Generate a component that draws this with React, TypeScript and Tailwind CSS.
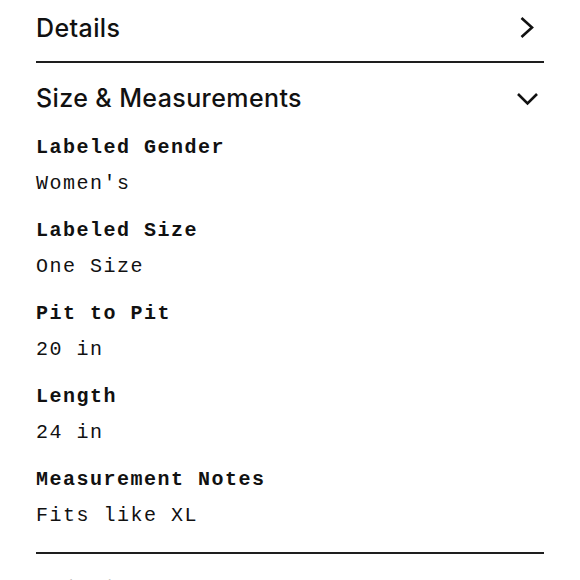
import React from "react";

const items = [
  { label: "Labeled Gender", value: "Women's" },
  { label: "Labeled Size", value: "One Size" },
  { label: "Pit to Pit", value: "20 in" },
  { label: "Length", value: "24 in" },
  { label: "Measurement Notes", value: "Fits like XL" },
];

const sans = { fontFamily: "Inter, 'Liberation Sans', sans-serif" };
const mono = { fontFamily: "'Liberation Mono', 'DejaVu Sans Mono', monospace" };

export default function App() {
  return (
    <div className="w-[580px] h-[580px] overflow-hidden bg-white text-[#111]">
      <div className="mx-[36px] flex flex-col">
        <div className="pt-[13px] flex items-center justify-between h-[44px]">
          <span className="text-[25px] leading-[31px] font-medium tracking-[0.4px]" style={sans}>
            Details
          </span>
          <svg width="32" height="32" viewBox="0 0 32 32" fill="none" className="shrink-0 -mt-[1px]">
            <path d="M9.5 6 L20 15.5 L9.5 25" stroke="#111" strokeWidth="2.6" strokeLinejoin="miter" />
          </svg>
        </div>
        <div className="mt-[17px] h-[2px] bg-[#1e1e1e]" />
        <div className="mt-[20px] flex items-center justify-between h-[31px]">
          <span className="text-[25px] leading-[31px] font-medium tracking-[0.4px]" style={sans}>
            Size &amp; Measurements
          </span>
          <svg width="32" height="32" viewBox="0 0 32 32" fill="none" className="shrink-0">
            <path d="M6 11 L15.5 20.5 L25 11" stroke="#111" strokeWidth="2.6" strokeLinejoin="miter" />
          </svg>
        </div>
        <div className="mt-[22px] flex flex-col gap-[23px]">
          {items.map((it) => (
            <div key={it.label} className="flex flex-col gap-[12px]" style={mono}>
              <span className="text-[20px] leading-[24px] font-bold tracking-[1.5px]">{it.label}</span>
              <span className="text-[20px] leading-[24px] font-normal tracking-[1.5px]">{it.value}</span>
            </div>
          ))}
        </div>
        <div className="mt-[24px] h-[2px] bg-[#1e1e1e]" />
        <div className="mt-[21px] flex items-center justify-between h-[31px]">
          <span className="text-[25px] leading-[31px] font-medium tracking-[0.4px]" style={sans}>
            Shipping
          </span>
        </div>
      </div>
    </div>
  );
}
